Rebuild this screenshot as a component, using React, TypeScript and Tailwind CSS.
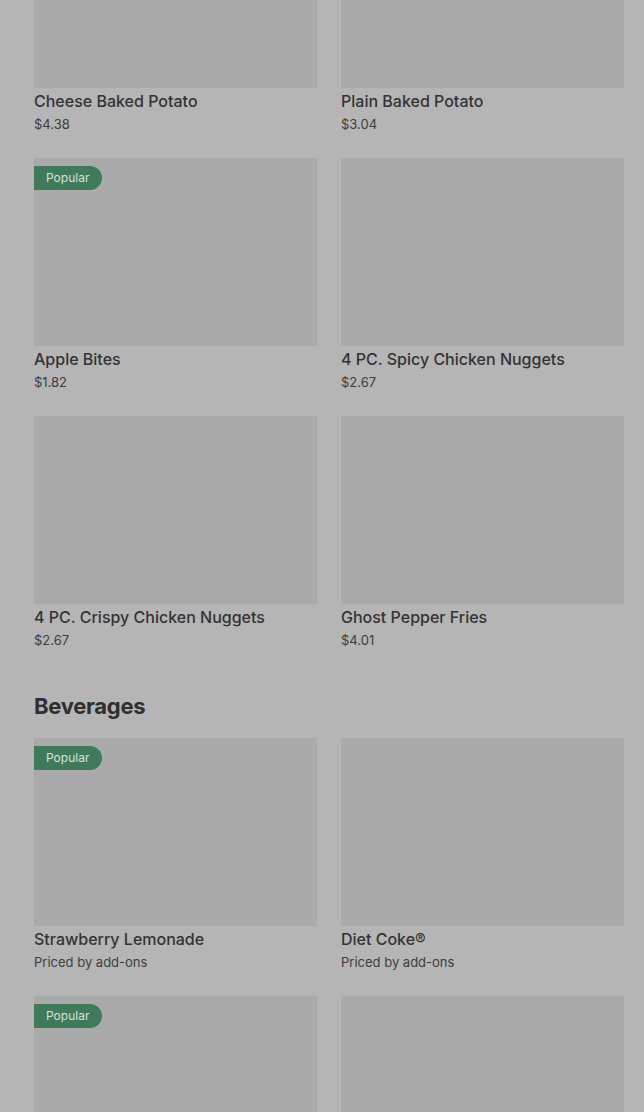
const snacks = [
  { name: "Cheese Baked Potato", price: "$4.38", popular: false },
  { name: "Plain Baked Potato", price: "$3.04", popular: false },
  { name: "Apple Bites", price: "$1.82", popular: true },
  { name: "4 PC. Spicy Chicken Nuggets", price: "$2.67", popular: false },
  { name: "4 PC. Crispy Chicken Nuggets", price: "$2.67", popular: false },
  { name: "Ghost Pepper Fries", price: "$4.01", popular: false },
];

// last row only shows its image tops above the fold
const beverages = [
  { name: "Strawberry Lemonade", price: "Priced by add-ons", popular: true },
  { name: "Diet Coke®", price: "Priced by add-ons", popular: false },
  { name: "", price: "", popular: true },
  { name: "", price: "", popular: false },
];

type Item = { name: string; price: string; popular: boolean };

const MenuCard = ({ item }: { item: Item }) => (
  <div className="flex flex-col pb-6">
    <div className="relative h-[188px] w-full bg-[#aaaaaa]">
      {item.popular && (
        <span className="absolute left-0 top-2 flex h-6 items-center rounded-r-full bg-[#3f7b5a] pl-3 pr-[13px] text-[12px] text-[#d4e3da]">
          Popular
        </span>
      )}
    </div>
    {item.name && (
      <>
        <p className="pt-[3px] text-[16px] font-medium leading-5 text-[#333333]">
          {item.name}
        </p>
        <p className="mt-[3px] text-[13px] leading-5 text-[#3d3d3d]">
          {item.price}
        </p>
      </>
    )}
  </div>
);

export default function App() {
  return (
    <div
      className="h-[1112px] w-full overflow-hidden bg-[#b5b5b5] pl-[34px] pr-5"
      style={{ fontFamily: "Inter, 'Liberation Sans', sans-serif" }}
    >
      <div className="-mt-[100px] grid grid-cols-2 gap-x-6">
        {snacks.map((item) => (
          <MenuCard key={item.name} item={item} />
        ))}
      </div>
      <h2 className="mb-4 mt-4 text-[22px] font-bold leading-8 tracking-[-0.3px] text-[#2f2f2f]">
        Beverages
      </h2>
      <div className="grid grid-cols-2 gap-x-6">
        {beverages.map((item, index) => (
          <MenuCard key={index} item={item} />
        ))}
      </div>
    </div>
  );
}
